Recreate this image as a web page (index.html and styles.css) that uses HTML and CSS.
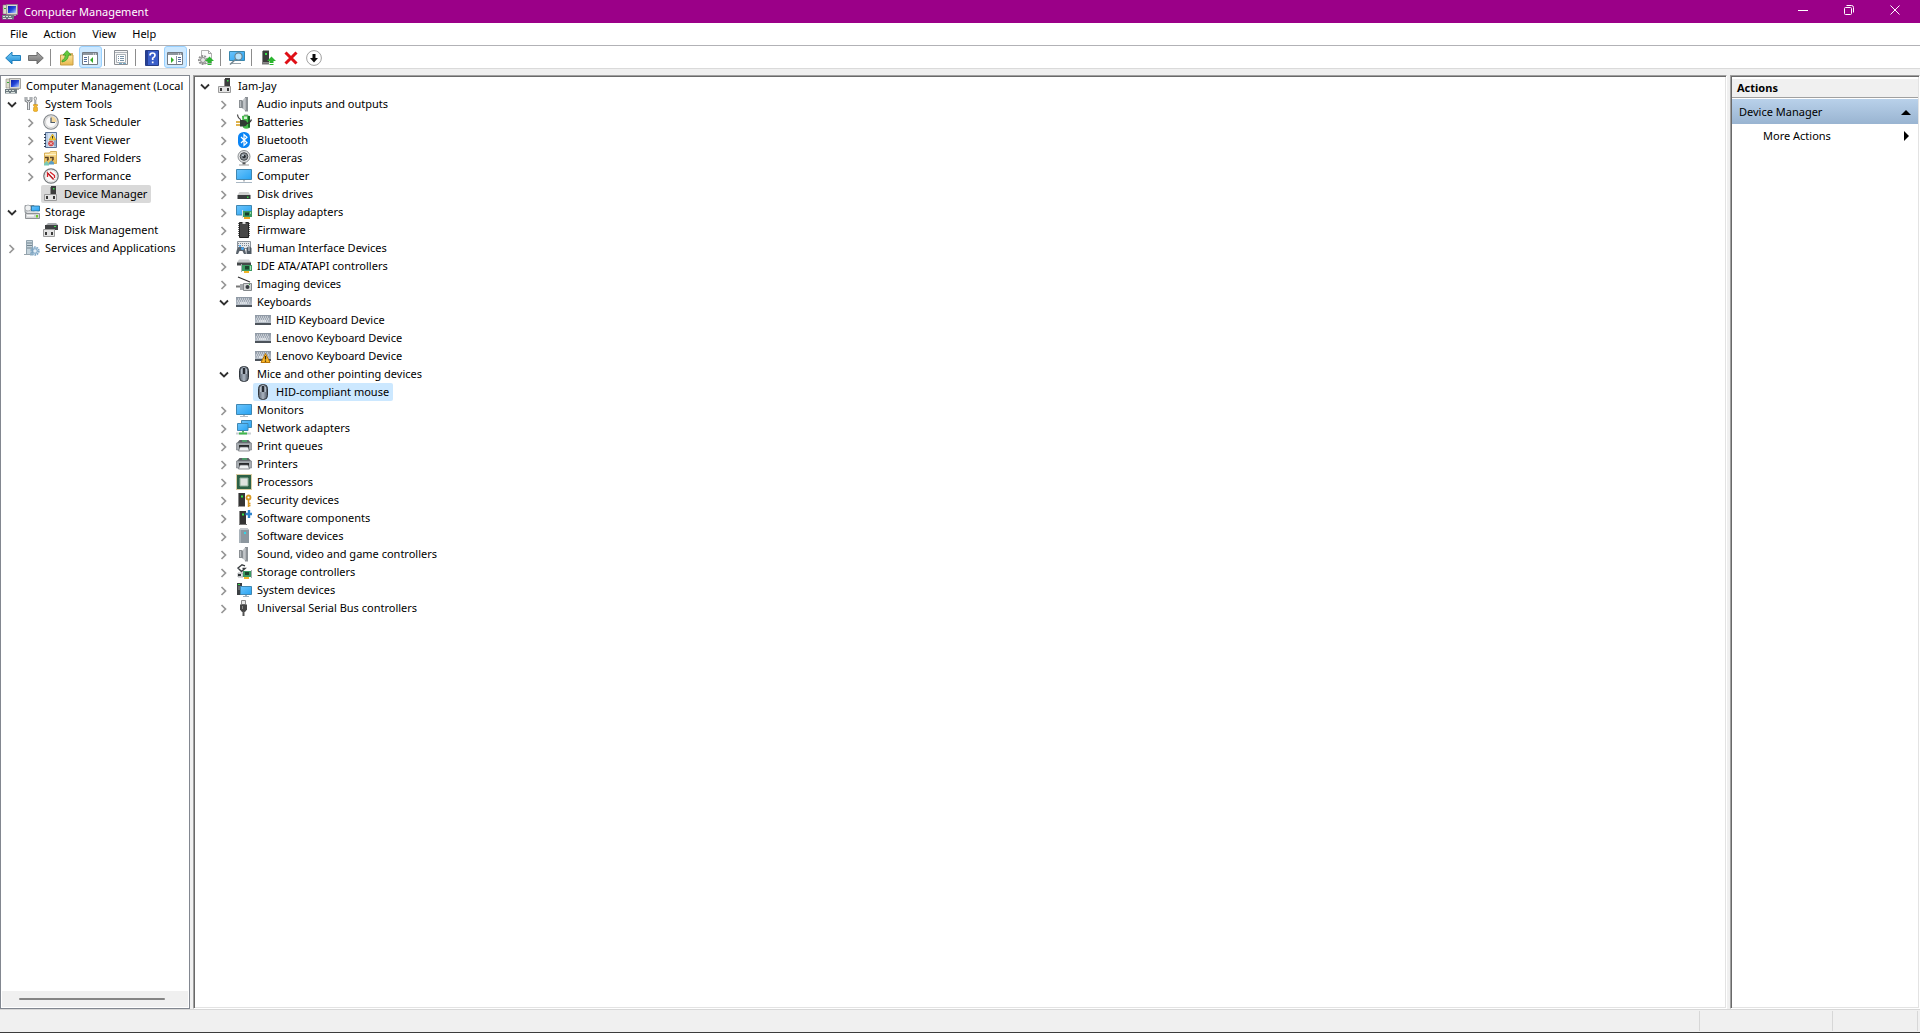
FILE: index.html
```html
<!DOCTYPE html>
<html lang="en">
<head>
<meta charset="utf-8">
<title>Computer Management</title>
<link rel="stylesheet" href="styles.css">
</head>
<body>
<svg class="sprite" aria-hidden="true">
  <defs>
    <linearGradient id="g-screen" x1="0" y1="0" x2="1" y2="1"><stop offset="0" stop-color="#6cc4fb"/><stop offset="1" stop-color="#27a3f3"/></linearGradient>
    <linearGradient id="g-navy" x1="0" y1="0" x2="1" y2="1"><stop offset="0" stop-color="#0a1fa8"/><stop offset=".5" stop-color="#2446d8"/><stop offset="1" stop-color="#b9d2ff"/></linearGradient>
    <linearGradient id="g-metal" x1="0" y1="0" x2="1" y2="0"><stop offset="0" stop-color="#6f7479"/><stop offset=".5" stop-color="#c9cdd1"/><stop offset="1" stop-color="#8b9095"/></linearGradient>
    <linearGradient id="g-mouse" x1="0" y1="0" x2="1" y2="0"><stop offset="0" stop-color="#5a6470"/><stop offset=".5" stop-color="#aab4c0"/><stop offset="1" stop-color="#4c5561"/></linearGradient>
    <linearGradient id="g-blue" x1="0" y1="0" x2="0" y2="1"><stop offset="0" stop-color="#7fd0f8"/><stop offset="1" stop-color="#1787d2"/></linearGradient>
    <linearGradient id="g-gray" x1="0" y1="0" x2="0" y2="1"><stop offset="0" stop-color="#b0b0b0"/><stop offset="1" stop-color="#707070"/></linearGradient>
    <linearGradient id="g-folder" x1="0" y1="0" x2="0" y2="1"><stop offset="0" stop-color="#fbe3a0"/><stop offset="1" stop-color="#e9b94e"/></linearGradient>
    <linearGradient id="g-key" x1="0" y1="0" x2="0" y2="1"><stop offset="0" stop-color="#8d97a3"/><stop offset="1" stop-color="#b6bec8"/></linearGradient>
  </defs>
  <symbol id="i-open" viewBox="0 0 16 16"><path d="M4 6.500 8 10.500l4-4" fill="none" stroke="#303030" stroke-width="1.800"/></symbol>
  <symbol id="i-closed" viewBox="0 0 16 16"><path d="M5.500 5 9.500 9 5.500 13" fill="none" stroke="#969696" stroke-width="1.700"/></symbol>
  <symbol id="i-mmc" viewBox="0 0 16 16"><path d="M1 1h4v9H1z" fill="#dcdccb" stroke="#8c8c80" stroke-width=".6"/><path d="M4.500.5h11v10h-11z" fill="#d8d8d2" stroke="#8a8a86" stroke-width=".7"/><path d="M6 2h8v7H6z" fill="url(#g-navy)"/><path d="M9 10.500h5V12H9z" fill="#a6a69e"/><path d="M0 11h12v4.500H0z" fill="#6e7a80"/><path d="M1 12h2v1H1zm3 0h2v1H4zm3 0h2v1H7zM1 14h3v1H1zm5 0h4v1H6z" fill="#d7e0dc"/><path d="M2 4h2v1H2z" fill="#38a938"/></symbol>
  <symbol id="i-tools" viewBox="0 0 16 16"><path d="M2 1v3.500L4.500 6 7 4.500V1M4.500 6v8" fill="none" stroke="#7b7f83" stroke-width="2.800"/><path d="M2 1v3.500L4.500 6 7 4.500V1M4.500 6v7.500" fill="none" stroke="#e3e6e8" stroke-width="1"/><path d="M10.500 1h1.500l.5 2-.7 1v5h-1V4l-.8-1z" fill="#fff" stroke="#7c8084" stroke-width=".8"/><path d="M9.500 8.500h4v1.500h-1v1.500h1V15q-2 1.500-4 0v-3.500h1V10h-1z" fill="#f5b82a" stroke="#c98a12" stroke-width=".5"/></symbol>
  <symbol id="i-clock" viewBox="0 0 16 16"><circle cx="8" cy="8" r="7.300" fill="#e8e8e8" stroke="#84888c" stroke-width="1.100"/><circle cx="8" cy="8" r="5.500" fill="#fafafa" stroke="#c0c0c0" stroke-width=".6"/><path d="M8 8V2.500A5.500 5.500 0 0 1 13.500 8z" fill="#f3d79b"/><path d="M8 3.500V8.500h4" fill="none" stroke="#4d5a68" stroke-width="1.200"/></symbol>
  <symbol id="i-event" viewBox="0 0 16 16"><path d="M2.500.5h11v15h-11z" fill="#b7cbe4" stroke="#5a7398"/><path d="M5 1h8v14H5z" fill="#d3e0f0"/><path d="M1 2h2v1H1zm0 3h2v1H1zm0 3h2v1H1zm0 3h2v1H1zm0 3h2v1H1z" fill="#2d3c52"/><path d="m9.500 2 3.500 6H6z" fill="#f7cf3a" stroke="#c39410" stroke-width=".6"/><path d="M9.500 4v2.500" stroke="#333"/><circle cx="8" cy="11.500" r="2.800" fill="#cf4444"/><path d="m6.800 10.300 2.400 2.400m0-2.400-2.400 2.400" stroke="#fff" stroke-width=".8"/><path d="M12 8.500v6" stroke="#4d74a8"/></symbol>
  <symbol id="i-shared" viewBox="0 0 16 16"><path d="M1.500 3h5l1-1.500h6v12h-12z" fill="url(#g-folder)" stroke="#cda03f" stroke-width=".8"/><path d="M2 4.500h11" stroke="#fff2c9"/><path d="M2 7.500h3v2l-1 1M7 7.500h3v2l-1 1" fill="none" stroke="#5a4026" stroke-width="1.500"/><path d="M1 15.500v-2L3.500 11 6 13.500v2z" fill="#79c9b5"/><path d="M6 14.500v-2L8.500 10.500 11 12.500v2z" fill="#5b9cc4"/></symbol>
  <symbol id="i-perf" viewBox="0 0 16 16"><circle cx="8" cy="8" r="7.200" fill="#fff" stroke="#74787b" stroke-width="1.300"/><circle cx="8" cy="8" r="5.800" fill="#fafafa" stroke="#d0d0d0" stroke-width=".6"/><path d="M4.500 9V5L10.500 11.500M7 4l4.500 3.500V10" fill="none" stroke="#d8232a" stroke-width="1.300"/><path d="m5 5 6 6.500" stroke="#7e1b1f" stroke-width=".7"/></symbol>
  <symbol id="i-dev" viewBox="0 0 16 16"><path d="M8 0h5v9H8z" fill="#3d3d3d"/><path d="M7 1h1v8H7z" fill="#8d8d8d"/><path d="M10 2h1.500v1.500H10z" fill="#3be04a"/><path d="M1.500 8.500h12v6h-12z" fill="#e4e4e4" stroke="#9b9b9b"/><path d="M3 10h2v3H3zm7 0h2v3h-2z" fill="#3a3a3a"/></symbol>
  <symbol id="i-storage" viewBox="0 0 16 16"><path d="M1 1.500h9v7H1z" fill="#c6cbce" stroke="#84898d" stroke-width=".8"/><circle cx="4" cy="4" r="3" fill="#eef0f1" stroke="#9ca1a5" stroke-width=".7"/><path d="M7.500 2h8v5h-8z" fill="url(#g-screen)" stroke="#1b6b9b" stroke-width=".8"/><path d="m2 9 2-1.500h9L15 9z" fill="#dfe1e3"/><path d="M1.500 9.500h14v5h-14z" fill="#d2d4d6" stroke="#777b80" stroke-width=".8"/><path d="M3 11h7v1.500H3z" fill="#f8f8f8"/><path d="M12 11h2v2.500h-2z" fill="#6fca2c"/></symbol>
  <symbol id="i-diskm" viewBox="0 0 16 16"><path d="m3 3 2-2h8l2 2z" fill="#a7aaad"/><path d="M2 3h13v5H2z" fill="#404244"/><path d="M11 4h2v1h-2z" fill="#3be04a"/><path d="M.5 7.500h11v7H.5z" fill="#e4e4e4" stroke="#9b9b9b"/><path d="M2 10h2v3H2zm6 0h2v3H8z" fill="#3a3a3a"/></symbol>
  <symbol id="i-services" viewBox="0 0 16 16"><path d="M2.500.5h6v14h-6z" fill="#c6d4dc" stroke="#7e929e" stroke-width=".8"/><path d="M3 3h5M3 5.500h5M3 8h5" stroke="#73848f"/><path d="M0 14.500h9" stroke="#97a4ac"/><circle cx="11" cy="11" r="3.700" fill="none" stroke="#7ea7c6" stroke-width="2" stroke-dasharray="1.600 .7"/><circle cx="11" cy="11" r="2.300" fill="#e5eff6" stroke="#6e9cc0"/><path d="M6 13.500h3M6 15h3" stroke="#8fb2cb"/></symbol>
  <symbol id="i-speaker" viewBox="0 0 16 16"><path d="M3 4h3v8H3z" fill="#8a8f93"/><path d="M4 5h1v6H4z" fill="#b9bdc1"/><path d="m6 5 3.500-4v14L6 12z" fill="url(#g-metal)"/><path d="M9 1h3v14.500H9z" fill="#8c9196"/><path d="M8.500 2h1v12h-1z" fill="#d7dadc"/></symbol>
  <symbol id="i-battery" viewBox="0 0 16 16"><path d="M8 .5h4V2H8z" fill="#9a9a9a"/><path d="M6 2q4-1.500 8 0v11.500q-4 2.500-7 0z" fill="#43b94a"/><path d="M12 2h2v11.500h-2z" fill="#1d6b25"/><path d="M8 2.500h3V5H8z" fill="#d3f3d0"/><path d="M1.500.500q.5 4 3.500 5" fill="none" stroke="#454545" stroke-width="1.200"/><path d="M0 8h5M0 11h5" stroke="#d39a14" stroke-width="1.400"/><path d="M4 6h3q4 0 4 3.200T7 12.500H4z" fill="#303a33"/><path d="M10 9.500q4 0 5.500-4" fill="none" stroke="#333" stroke-width="1.300"/></symbol>
  <symbol id="i-bt" viewBox="0 0 16 16"><rect x="2" y="0" width="12" height="16" rx="5.500" fill="#0a84f5"/><path d="m5 5 6 5.800-3 2.700v-11l3 2.700L5 11" fill="none" stroke="#fff" stroke-width="1.200"/></symbol>
  <symbol id="i-camera" viewBox="0 0 16 16"><circle cx="8" cy="6.500" r="6" fill="#e2e3e4" stroke="#8b8f92"/><circle cx="8" cy="6.500" r="3.800" fill="#8a9095" stroke="#43484c"/><circle cx="8" cy="6.500" r="1.800" fill="#252a2e"/><circle cx="7" cy="5.500" r=".9" fill="#d5e2ec"/><path d="M6.500 12.500h3v2h-3z" fill="#555"/><path d="M3 15h10" stroke="#999" stroke-width="1"/></symbol>
  <symbol id="i-computer" viewBox="0 0 16 16"><path d="M.5 1.500h15v10H.5z" fill="url(#g-screen)" stroke="#3f87b2"/><path d="M7 12h2v1.500H7z" fill="#b8bcc0"/><path d="M0 14.500h16" stroke="#a9b7c3"/></symbol>
  <symbol id="i-disk" viewBox="0 0 16 16"><path d="m1.500 9 2-3h9l2 3z" fill="#cfcfcf"/><path d="M1.500 9h13v4h-13z" fill="#393b3d"/><path d="M11 10.500h1.500V12H11z" fill="#35d845"/></symbol>
  <symbol id="i-display" viewBox="0 0 16 16"><path d="M.5 1.500h15v9.500H.5z" fill="url(#g-screen)" stroke="#3f87b2"/><path d="M7 7h9v6H7z" fill="#3b9a62"/><path d="M9 8.500h4v3H9z" fill="#173e2a"/><path d="M14 8h1v2h-1z" fill="#9adab0"/><path d="M8 13h6v2H8z" fill="#e8a520"/><path d="M6.500 6v8" stroke="#dbe1e4"/></symbol>
  <symbol id="i-firmware" viewBox="0 0 16 16"><path d="M2 1.500h12M2 3.500h12M2 5.500h12M2 7.500h12M2 9.500h12M2 11.500h12M2 13.500h12" stroke="#6b6b6b"/><path d="M3.500.5h9v15h-9z" fill="#484848" stroke="#222"/><path d="M6.500 0h3v2h-3z" fill="#ddd"/></symbol>
  <symbol id="i-hid" viewBox="0 0 16 16"><path d="M1.500 1.500h13v7h-13z" fill="#e5e8eb" stroke="#8d959d"/><path d="M2 3.500h12M2 5.500h12" stroke="#7d8791" stroke-dasharray="1 1"/><path d="M0 14q.5-5 2.500-7h5q2 2 2.500 7H8l-1.500-3h-3L2 14z" fill="#59626b"/><circle cx="6.500" cy="8.500" r="1.500" fill="#4aa5ec"/><circle cx="4" cy="6" r="1" fill="#4aa5ec"/><path d="M10.500 8q2.500-3 5 0v6h-5z" fill="#4e5862"/><path d="M13 7v4" stroke="#d3dbe3"/></symbol>
  <symbol id="i-ide" viewBox="0 0 16 16"><path d="m1 4.500 2-3h10l2 3z" fill="#c9cbcd"/><path d="M1 4.500h14v3H1z" fill="#44484a"/><path d="M6 7h10v6H6z" fill="#3b9a62"/><path d="M9 8h4v3.500H9z" fill="#1b452e"/><path d="M14 8h1v4h-1z" fill="#a5e0b5"/><path d="M8 13h5v2H8z" fill="#f0b429"/><path d="M5.500 6v8" stroke="#a7adb1"/></symbol>
  <symbol id="i-imaging" viewBox="0 0 16 16"><path d="m2 1 12 5" stroke="#303030" stroke-width="1.200"/><path d="M0 9.500h5v2H0z" fill="#777"/><path d="M4 8h4v6H4z" fill="#a3a7aa"/><path d="M7.500 7.500h8v7h-8z" fill="#d3d5d6" stroke="#85898c"/><circle cx="11.500" cy="11" r="2" fill="#353b3f"/><path d="M13 8.500h1" stroke="#37bb45"/></symbol>
  <symbol id="i-keyboard" viewBox="0 0 16 16"><path d="M0 3h16v8H0z" fill="url(#g-key)"/><path d="M2 5h12M2 9h12" stroke="#f0f3f6" stroke-dasharray="1 1"/><path d="M1 7h13" stroke="#f0f3f6" stroke-dasharray="1 1"/><path d="M4 9h7" stroke="#f0f3f6"/><path d="M0 11h16v2H0z" fill="#4c535b"/></symbol>
  <symbol id="i-kbwarn" viewBox="0 0 16 16"><use href="#i-keyboard" width="16" height="16"/><path d="m10.500 5.500 4.500 9h-9z" fill="#fbb829" stroke="#b9760a" stroke-linejoin="round"/><path d="M10.500 8v3.500M10.500 12.500v1.300" stroke="#3c2a05" stroke-width="1.300"/></symbol>
  <symbol id="i-mouse" viewBox="0 0 16 16"><rect x="3.500" y=".5" width="9" height="15" rx="4" fill="url(#g-mouse)" stroke="#30363d"/><path d="M8 2v6" stroke="#1b1f24" stroke-width="1.800"/><path d="M5.500 3v5M10.500 3v5" stroke="#ccd4dd" stroke-width=".7"/></symbol>
  <symbol id="i-monitor" viewBox="0 0 16 16"><path d="M.5 2.500h15v10H.5z" fill="url(#g-screen)" stroke="#3f87b2"/><path d="M7 13h2v1H7zM4 14h8v1H4z" fill="#b4bec6"/></symbol>
  <symbol id="i-network" viewBox="0 0 16 16"><path d="M5.500.5h10v7h-10z" fill="url(#g-screen)" stroke="#3f87b2"/><path d="M1.500 3.500h10.500v7H1.500z" fill="url(#g-screen)" stroke="#3f87b2"/><path d="M6 11h2v2H6z" fill="#54b85d"/><path d="M0 13.500h15" stroke="#cbd0d4" stroke-width="2"/><path d="M3 13.500h8" stroke="#3fb74c" stroke-width="2"/></symbol>
  <symbol id="i-printer" viewBox="0 0 16 16"><path d="m1 5 2.500-3h9L15 5z" fill="#5c6166"/><path d="M6 3h5" stroke="#40d26c"/><path d="M.5 5h15v7H.5z" fill="#a6abb0" stroke="#7c8288" stroke-width=".7"/><path d="M3 7h10v3H3z" fill="#27292b"/><path d="M4 9h8l1.500 4h-11z" fill="#eef0f2" stroke="#5e6367" stroke-width=".7"/></symbol>
  <symbol id="i-cpu" viewBox="0 0 16 16"><path d="M.5.5h15v15H.5z" fill="none" stroke="#b29b48" stroke-dasharray="1 1"/><path d="M1 1h14v14H1z" fill="#2c6146"/><path d="M4 4h8v8H4z" fill="#dfe3e0" stroke="#8fb09c"/></symbol>
  <symbol id="i-security" viewBox="0 0 16 16"><path d="M3 1h6v13H3z" fill="#343434"/><path d="M2.500 1v13" stroke="#8a8a8a"/><path d="M5 3.500h2v2H5z" fill="#35e348"/><path d="M2 14h7v1H2z" fill="#999"/><circle cx="12.500" cy="5.500" r="2" fill="#fff" stroke="#d99a24" stroke-width="1.800"/><path d="M12.500 8v7M12.500 11.500h2M12.500 13.500h2" stroke="#d99a24" stroke-width="1.500" fill="none"/></symbol>
  <symbol id="i-component" viewBox="0 0 16 16"><path d="M4 1h6v13H4z" fill="#343434"/><path d="M3.500 1v13" stroke="#8a8a8a"/><path d="M6 3.500h2v2H6z" fill="#35e348"/><path d="M3 14h8v1H3z" fill="#777"/><path d="M13 0v8M9.500 4H16" stroke="#2f84cc" stroke-width="2.400"/></symbol>
  <symbol id="i-softdev" viewBox="0 0 16 16"><path d="m3 2 2-2h6l2 2v13H3z" fill="#8d979f"/><path d="m3 2 2-2h6l2 2z" fill="#c3c9ce"/><path d="M3 2h2v13H3z" fill="#a8b1b8"/><path d="M8 4h2v2H8z" fill="#33d6e8"/></symbol>
  <symbol id="i-storctl" viewBox="0 0 16 16"><path d="M9 1.800 6 .8 2 4l3.500 3.500L9 4.500H6.500" fill="none" stroke="#3b3f42" stroke-width="1.400"/><path d="M2 9h5v4H2z" fill="#e3e6e8" stroke="#83888b" stroke-width=".6"/><path d="M2 11h3" stroke="#2f3437" stroke-width="2"/><path d="M7 7h8v6H7z" fill="#3b9a62"/><path d="M9 8h4v3H9z" fill="#1b452e"/><path d="M8 13h5v2H8z" fill="#f0b429"/><path d="M15.500 6v8" stroke="#a7adb1"/></symbol>
  <symbol id="i-system" viewBox="0 0 16 16"><path d="M1 1h5v12H1z" fill="#3c4043"/><path d="M2 2.500h2" stroke="#37dd4a"/><path d="M2 5h3M2 7h3" stroke="#8e9499"/><path d="M4.500 4.500h11v8h-11z" fill="url(#g-screen)" stroke="#3f87b2"/><path d="M9 13h2v1H9zM7 14h6v1H7z" fill="#9fb0bd"/></symbol>
  <symbol id="i-usb" viewBox="0 0 16 16"><path d="M5.500.5h4v4h-4z" fill="#e8e8e8" stroke="#888"/><path d="M4 4.500h7v5L9 12H6L4 9.500z" fill="#454545"/><path d="M7.500 11v5" stroke="#555" stroke-width="2"/><path d="M6.500 6v3" stroke="#8a8a8a"/></symbol>
  <symbol id="t-back" viewBox="0 0 16 16"><path d="M.7 8 7 2v3.500h8.500v5H7V14z" fill="url(#g-blue)" stroke="#1f7fbd"/></symbol>
  <symbol id="t-fwd" viewBox="0 0 16 16"><path d="M15.300 8 9 2v3.500H.5v5H9V14z" fill="url(#g-gray)" stroke="#6e6e6e"/></symbol>
  <symbol id="t-up" viewBox="0 0 16 16"><path d="M1.500 5h12.500v10H1.500z" fill="url(#g-folder)" stroke="#c79d45"/><path d="M9 4h5" stroke="#c79d45" stroke-width="1.500"/><path d="M3 10.500q3-1 3.500-5.500H4L8 .5 12 5H9.500q-.5 6-6.500 7z" fill="#62c93c" stroke="#369421" stroke-width=".7"/></symbol>
  <symbol id="t-pane" viewBox="0 0 16 16"><path d="M.5 2.500h15v12H.5z" fill="#fff" stroke="#727a83"/><path d="M1 3h14v2H1z" fill="#8e969f"/><path d="M11 4h1m1 0h1" stroke="#fff"/><path d="M6.500 6v8" stroke="#8e969f"/><path d="M2 7.500h3M2 9.500h3M2 11.500h3" stroke="#536b9d"/><path d="M11 7v6l-3-3z" fill="#33a928"/></symbol>
  <symbol id="t-pane2" viewBox="0 0 16 16"><path d="M.5 2.500h15v12H.5z" fill="#fff" stroke="#727a83"/><path d="M1 3h14v2H1z" fill="#8e969f"/><path d="M11 4h1m1 0h1" stroke="#fff"/><path d="M9.500 6v8" stroke="#8e969f"/><path d="M11 7.500h3M11 9.500h3M11 11.500h3" stroke="#536b9d"/><path d="M4 7v6l3-3z" fill="#33a928"/></symbol>
  <symbol id="t-props" viewBox="0 0 16 16"><path d="M1.500.5h13v14h-13z" fill="#f6f6f6" stroke="#8b8f94"/><path d="M2 2.500h12" stroke="#aeb3b9"/><path d="M3.500 4.500h9v8h-9z" fill="#fff" stroke="#adb3b8"/><path d="M5 6.500h1m1 0h4M5 8.500h1m1 0h4M5 10.500h1m1 0h4" stroke="#7893a8"/><path d="M6 13.500h3m1 0h3" stroke="#77abc8"/></symbol>
  <symbol id="t-help" viewBox="0 0 16 16"><path d="M1.500.5h13v15h-13z" fill="#3a5ec9" stroke="#263d87"/><path d="M2 1h2v14H2z" fill="#253f96"/><path d="M6 5.500q0-2.500 2.500-2.500T11 5.300Q11 7 8.700 8.200V10M8.700 11.500v1.800" fill="none" stroke="#fff" stroke-width="1.700"/></symbol>
  <symbol id="t-scan" viewBox="0 0 16 16"><path d="M3.500.5h7l3 3v10h-10z" fill="#fafafa" stroke="#b1b1b1"/><path d="M10.500.5v3h3" fill="none" stroke="#a5a5a5"/><circle cx="5" cy="10" r="4" fill="none" stroke="#909090" stroke-width="2" stroke-dasharray="1.800 1"/><circle cx="5" cy="10" r="2.500" fill="#e5e5e5" stroke="#8b8b8b"/><path d="m11.500 6.500 4.500 4.500h-2.500v2h-4v-2H7z" fill="#2bb52f"/><path d="M9.500 14.500h4" stroke="#2bb52f"/></symbol>
  <symbol id="t-find" viewBox="0 0 16 16"><path d="M.5 1.500h15v9H.5z" fill="url(#g-screen)" stroke="#3a86ac"/><path d="M3 13.500h9" stroke="#9aa5ad"/><path d="m7 9-6 5.500" stroke="#728690" stroke-width="1.600"/><circle cx="9.500" cy="6.500" r="3.600" fill="#b7e3fb" stroke="#688391" stroke-width="1.100"/></symbol>
  <symbol id="t-update" viewBox="0 0 16 16"><path d="M3 .5h6v12H3z" fill="#3b3b3b"/><path d="M2.500 1v12" stroke="#888"/><path d="M5 3h2v2H5z" fill="#36df48"/><path d="M2 12.500h7v2H2z" fill="#777"/><path d="m11.500 6.500 4.500 4.500h-2.500v2h-4v-2H7z" fill="#2bb52f"/><path d="M9.500 14.500h4" stroke="#2bb52f"/></symbol>
  <symbol id="t-x" viewBox="0 0 16 16"><path d="m2.500 2.500 11 11m0-11-11 11" stroke="#df0f16" stroke-width="3"/></symbol>
  <symbol id="t-down" viewBox="0 0 16 16"><circle cx="8" cy="8" r="7.400" fill="#fff" stroke="#898989" stroke-width=".8"/><path d="M6.500 4h3v4H12l-4 4.500L4 8h2.500z" fill="#0b0b0b"/></symbol>
</svg>

<header class="titlebar">
  <svg class="icon"><use href="#i-mmc"/></svg>
  <h1 class="title">Computer Management</h1>
  <div class="window-buttons">
    <button type="button" aria-label="Minimize"><svg viewBox="0 0 10 10"><path d="M0 5.500h10"/></svg></button>
    <button type="button" aria-label="Restore"><svg viewBox="0 0 10 10"><rect x=".5" y="2.500" width="7" height="7" rx="1"/><path d="M2.500.5h5q2 0 2 2v5"/></svg></button>
    <button type="button" aria-label="Close"><svg viewBox="0 0 10 10"><path d="m.5.500 9 9m0-9-9 9"/></svg></button>
  </div>
</header>

<nav class="menubar">
  <button type="button">File</button>
  <button type="button">Action</button>
  <button type="button">View</button>
  <button type="button">Help</button>
</nav>

<div class="toolbar" role="toolbar" aria-label="Tools">
  <button type="button" aria-label="Back"><svg class="icon"><use href="#t-back"/></svg></button>
  <button type="button" aria-label="Forward"><svg class="icon"><use href="#t-fwd"/></svg></button>
  <span class="separator"></span>
  <button type="button" aria-label="Up one level"><svg class="icon"><use href="#t-up"/></svg></button>
  <button type="button" class="pressed" aria-pressed="true" aria-label="Console tree"><svg class="icon"><use href="#t-pane"/></svg></button>
  <span class="separator"></span>
  <button type="button" aria-label="Properties"><svg class="icon"><use href="#t-props"/></svg></button>
  <span class="separator"></span>
  <button type="button" aria-label="Help"><svg class="icon"><use href="#t-help"/></svg></button>
  <button type="button" class="pressed" aria-pressed="true" aria-label="Action pane"><svg class="icon"><use href="#t-pane2"/></svg></button>
  <span class="separator"></span>
  <button type="button" aria-label="Update driver"><svg class="icon"><use href="#t-scan"/></svg></button>
  <span class="separator"></span>
  <button type="button" aria-label="Scan for hardware changes"><svg class="icon"><use href="#t-find"/></svg></button>
  <span class="separator"></span>
  <button type="button" aria-label="Update device"><svg class="icon"><use href="#t-update"/></svg></button>
  <button type="button" aria-label="Uninstall device"><svg class="icon"><use href="#t-x"/></svg></button>
  <button type="button" aria-label="Disable device"><svg class="icon"><use href="#t-down"/></svg></button>
</div>

<main class="panes">
  <nav class="console" aria-label="Console tree">
    <ul class="tree">
      <li><div class="row"><span class="item"><svg class="icon"><use href="#i-mmc"/></svg>Computer Management (Local</span></div></li>
      <li><div class="row"><button type="button" class="twisty" aria-label="Collapse"><svg class="icon"><use href="#i-open"/></svg></button><span class="item"><svg class="icon"><use href="#i-tools"/></svg>System Tools</span></div>
        <ul>
          <li><div class="row"><button type="button" class="twisty" aria-label="Expand"><svg class="icon"><use href="#i-closed"/></svg></button><span class="item"><svg class="icon"><use href="#i-clock"/></svg>Task Scheduler</span></div></li>
          <li><div class="row"><button type="button" class="twisty" aria-label="Expand"><svg class="icon"><use href="#i-closed"/></svg></button><span class="item"><svg class="icon"><use href="#i-event"/></svg>Event Viewer</span></div></li>
          <li><div class="row"><button type="button" class="twisty" aria-label="Expand"><svg class="icon"><use href="#i-closed"/></svg></button><span class="item"><svg class="icon"><use href="#i-shared"/></svg>Shared Folders</span></div></li>
          <li><div class="row"><button type="button" class="twisty" aria-label="Expand"><svg class="icon"><use href="#i-closed"/></svg></button><span class="item"><svg class="icon"><use href="#i-perf"/></svg>Performance</span></div></li>
          <li><div class="row leaf"><span class="item current"><svg class="icon"><use href="#i-dev"/></svg>Device Manager</span></div></li>
        </ul>
      </li>
      <li><div class="row"><button type="button" class="twisty" aria-label="Collapse"><svg class="icon"><use href="#i-open"/></svg></button><span class="item"><svg class="icon"><use href="#i-storage"/></svg>Storage</span></div>
        <ul>
          <li><div class="row leaf"><span class="item"><svg class="icon"><use href="#i-diskm"/></svg>Disk Management</span></div></li>
        </ul>
      </li>
      <li><div class="row"><button type="button" class="twisty" aria-label="Expand"><svg class="icon"><use href="#i-closed"/></svg></button><span class="item"><svg class="icon"><use href="#i-services"/></svg>Services and Applications</span></div></li>
    </ul>
    <div class="scrollbar"><div class="thumb"></div></div>
  </nav>

  <section class="devices sunken" aria-label="Devices">
    <ul class="tree">
      <li><div class="row"><button type="button" class="twisty" aria-label="Collapse"><svg class="icon"><use href="#i-open"/></svg></button><span class="item"><svg class="icon"><use href="#i-dev"/></svg>Iam-Jay</span></div>
        <ul>
          <li><div class="row"><button type="button" class="twisty" aria-label="Expand"><svg class="icon"><use href="#i-closed"/></svg></button><span class="item"><svg class="icon"><use href="#i-speaker"/></svg>Audio inputs and outputs</span></div></li>
          <li><div class="row"><button type="button" class="twisty" aria-label="Expand"><svg class="icon"><use href="#i-closed"/></svg></button><span class="item"><svg class="icon"><use href="#i-battery"/></svg>Batteries</span></div></li>
          <li><div class="row"><button type="button" class="twisty" aria-label="Expand"><svg class="icon"><use href="#i-closed"/></svg></button><span class="item"><svg class="icon"><use href="#i-bt"/></svg>Bluetooth</span></div></li>
          <li><div class="row"><button type="button" class="twisty" aria-label="Expand"><svg class="icon"><use href="#i-closed"/></svg></button><span class="item"><svg class="icon"><use href="#i-camera"/></svg>Cameras</span></div></li>
          <li><div class="row"><button type="button" class="twisty" aria-label="Expand"><svg class="icon"><use href="#i-closed"/></svg></button><span class="item"><svg class="icon"><use href="#i-computer"/></svg>Computer</span></div></li>
          <li><div class="row"><button type="button" class="twisty" aria-label="Expand"><svg class="icon"><use href="#i-closed"/></svg></button><span class="item"><svg class="icon"><use href="#i-disk"/></svg>Disk drives</span></div></li>
          <li><div class="row"><button type="button" class="twisty" aria-label="Expand"><svg class="icon"><use href="#i-closed"/></svg></button><span class="item"><svg class="icon"><use href="#i-display"/></svg>Display adapters</span></div></li>
          <li><div class="row"><button type="button" class="twisty" aria-label="Expand"><svg class="icon"><use href="#i-closed"/></svg></button><span class="item"><svg class="icon"><use href="#i-firmware"/></svg>Firmware</span></div></li>
          <li><div class="row"><button type="button" class="twisty" aria-label="Expand"><svg class="icon"><use href="#i-closed"/></svg></button><span class="item"><svg class="icon"><use href="#i-hid"/></svg>Human Interface Devices</span></div></li>
          <li><div class="row"><button type="button" class="twisty" aria-label="Expand"><svg class="icon"><use href="#i-closed"/></svg></button><span class="item"><svg class="icon"><use href="#i-ide"/></svg>IDE ATA/ATAPI controllers</span></div></li>
          <li><div class="row"><button type="button" class="twisty" aria-label="Expand"><svg class="icon"><use href="#i-closed"/></svg></button><span class="item"><svg class="icon"><use href="#i-imaging"/></svg>Imaging devices</span></div></li>
          <li><div class="row"><button type="button" class="twisty" aria-label="Collapse"><svg class="icon"><use href="#i-open"/></svg></button><span class="item"><svg class="icon"><use href="#i-keyboard"/></svg>Keyboards</span></div>
            <ul>
              <li><div class="row leaf"><span class="item"><svg class="icon"><use href="#i-keyboard"/></svg>HID Keyboard Device</span></div></li>
              <li><div class="row leaf"><span class="item"><svg class="icon"><use href="#i-keyboard"/></svg>Lenovo Keyboard Device</span></div></li>
              <li><div class="row leaf"><span class="item"><svg class="icon"><use href="#i-kbwarn"/></svg>Lenovo Keyboard Device</span></div></li>
            </ul>
          </li>
          <li><div class="row"><button type="button" class="twisty" aria-label="Collapse"><svg class="icon"><use href="#i-open"/></svg></button><span class="item"><svg class="icon"><use href="#i-mouse"/></svg>Mice and other pointing devices</span></div>
            <ul>
              <li><div class="row leaf"><span class="item selected"><svg class="icon"><use href="#i-mouse"/></svg>HID-compliant mouse</span></div></li>
            </ul>
          </li>
          <li><div class="row"><button type="button" class="twisty" aria-label="Expand"><svg class="icon"><use href="#i-closed"/></svg></button><span class="item"><svg class="icon"><use href="#i-monitor"/></svg>Monitors</span></div></li>
          <li><div class="row"><button type="button" class="twisty" aria-label="Expand"><svg class="icon"><use href="#i-closed"/></svg></button><span class="item"><svg class="icon"><use href="#i-network"/></svg>Network adapters</span></div></li>
          <li><div class="row"><button type="button" class="twisty" aria-label="Expand"><svg class="icon"><use href="#i-closed"/></svg></button><span class="item"><svg class="icon"><use href="#i-printer"/></svg>Print queues</span></div></li>
          <li><div class="row"><button type="button" class="twisty" aria-label="Expand"><svg class="icon"><use href="#i-closed"/></svg></button><span class="item"><svg class="icon"><use href="#i-printer"/></svg>Printers</span></div></li>
          <li><div class="row"><button type="button" class="twisty" aria-label="Expand"><svg class="icon"><use href="#i-closed"/></svg></button><span class="item"><svg class="icon"><use href="#i-cpu"/></svg>Processors</span></div></li>
          <li><div class="row"><button type="button" class="twisty" aria-label="Expand"><svg class="icon"><use href="#i-closed"/></svg></button><span class="item"><svg class="icon"><use href="#i-security"/></svg>Security devices</span></div></li>
          <li><div class="row"><button type="button" class="twisty" aria-label="Expand"><svg class="icon"><use href="#i-closed"/></svg></button><span class="item"><svg class="icon"><use href="#i-component"/></svg>Software components</span></div></li>
          <li><div class="row"><button type="button" class="twisty" aria-label="Expand"><svg class="icon"><use href="#i-closed"/></svg></button><span class="item"><svg class="icon"><use href="#i-softdev"/></svg>Software devices</span></div></li>
          <li><div class="row"><button type="button" class="twisty" aria-label="Expand"><svg class="icon"><use href="#i-closed"/></svg></button><span class="item"><svg class="icon"><use href="#i-speaker"/></svg>Sound, video and game controllers</span></div></li>
          <li><div class="row"><button type="button" class="twisty" aria-label="Expand"><svg class="icon"><use href="#i-closed"/></svg></button><span class="item"><svg class="icon"><use href="#i-storctl"/></svg>Storage controllers</span></div></li>
          <li><div class="row"><button type="button" class="twisty" aria-label="Expand"><svg class="icon"><use href="#i-closed"/></svg></button><span class="item"><svg class="icon"><use href="#i-system"/></svg>System devices</span></div></li>
          <li><div class="row"><button type="button" class="twisty" aria-label="Expand"><svg class="icon"><use href="#i-closed"/></svg></button><span class="item"><svg class="icon"><use href="#i-usb"/></svg>Universal Serial Bus controllers</span></div></li>
        </ul>
      </li>
    </ul>
  </section>

  <aside class="actions sunken">
    <h2 class="actions-title">Actions</h2>
    <button type="button" class="group">Device Manager<svg class="arrow" viewBox="0 0 10 10"><path d="M0 8h10L5 3z"/></svg></button>
    <button type="button" class="more">More Actions<svg class="arrow" viewBox="0 0 10 10"><path d="M3 0v10l5-5z"/></svg></button>
  </aside>
</main>

<footer class="status">
  <span class="cell wide"></span>
  <span class="cell medium"></span>
  <span class="cell small"></span>
</footer>
</body>
</html>
```
FILE: styles.css
```css
* {
  box-sizing: border-box;
}

body {
  display: flex;
  flex-direction: column;
  min-height: 100vh;
  margin: 0;
  background: #f0f0f0;
  color: #000;
  font: 11px/18px "Noto Sans", "Open Sans", sans-serif;
}

button {
  padding: 0;
  border: 0;
  background: none;
  color: inherit;
  font: inherit;
}

ul {
  margin: 0;
  padding: 0;
  list-style: none;
}

.sprite {
  position: absolute;
  width: 0;
  height: 0;
}

.icon {
  display: block;
  flex: none;
  width: 16px;
  height: 16px;
}

/* Title bar */
.titlebar {
  display: flex;
  align-items: center;
  gap: 6px;
  height: 23px;
  padding-left: 2px;
  background: #9b0088;
  color: #fff;
}

.title {
  flex: 1;
  margin: 0;
  font-size: 11px;
  font-weight: 400;
}

.window-buttons {
  display: flex;
  align-self: stretch;
  padding-right: 2px;
}

.window-buttons button {
  display: grid;
  place-items: center;
  width: 46px;
  padding-bottom: 3px;
}

.window-buttons svg {
  width: 10px;
  height: 10px;
  fill: none;
  stroke: #fff;
}

/* Menu and toolbar */
.menubar {
  display: flex;
  height: 23px;
  padding-left: 2px;
  border-bottom: 1px solid #b2b2b6;
  background: #fff;
}

.menubar button {
  padding: 0 8px;
}

.toolbar {
  display: flex;
  height: 23px;
  padding-left: 2px;
  border-bottom: 1px solid #dadada;
  background: #fff;
}

.toolbar button {
  width: 23px;
  padding: 3px 3px 1px 2px;
  border: 1px solid transparent;
  border-radius: 3px;
}

.toolbar .pressed {
  border-color: #99d1ff;
  background: #cce8ff;
}

.separator {
  width: 8px;
  padding: 3px 0 2px 2px;
}

.separator::before {
  display: block;
  width: 1px;
  height: 100%;
  background: #8c8c8c;
  content: "";
}

/* Panes */
.panes {
  display: grid;
  flex: 1;
  grid-template-columns: 190px minmax(0, 1fr) 190px;
  gap: 3px;
  margin-top: 6px;
}

.console {
  display: flex;
  flex-direction: column;
  overflow: hidden;
  padding: 1px;
  border: 1px solid #828790;
  background: #fff;
}

.console .tree {
  flex: 1;
  padding-left: 1px;
}

.sunken {
  padding: 1px;
  border: 1px solid;
  border-color: #a0a0a0 #fff #fff #a0a0a0;
  background: #fff;
  box-shadow: inset 1px 1px #696969, inset -1px -1px #e3e3e3;
}

.devices .tree {
  padding-left: 1px;
}

.tree ul {
  padding-left: 19px;
}

.row {
  display: flex;
  height: 18px;
  white-space: nowrap;
}

.leaf {
  padding-left: 19px;
}

.twisty {
  width: 19px;
  padding: 1px 2px 1px 1px;
}

.item {
  display: flex;
  align-items: center;
  gap: 5px;
  padding: 0 4px 0 2px;
  border-radius: 2px;
}

.current {
  background: #d9d9d9;
}

.selected {
  background: #cce8ff;
}

.scrollbar {
  display: flex;
  align-items: center;
  height: 16px;
  padding: 0 23px 0 17px;
  background: #f0f0f0;
}

.thumb {
  flex: 1;
  height: 2px;
  border-radius: 1px;
  background: #858585;
}

/* Actions pane */
.actions {
  display: flex;
  flex-direction: column;
}

.actions-title {
  height: 19px;
  margin: 2px 0 1px;
  padding-left: 5px;
  border-bottom: 1px solid #a0a0a0;
  background: #f0f0f0;
  font-size: 11px;
  font-weight: 700;
}

.group,
.more {
  display: flex;
  align-items: center;
  justify-content: space-between;
  height: 25px;
  padding: 0 7px;
  text-align: left;
}

.group {
  background: linear-gradient(#b9d1ea, #99b4d1);
}

.more {
  height: 23px;
  padding-left: 31px;
}

.arrow {
  width: 10px;
  height: 10px;
}

/* Status bar */
.status {
  display: flex;
  height: 24px;
  padding: 1px 2px 1px 0;
  border-top: 1px solid #d7d7d7;
  border-bottom: 1px solid #3c3c3c;
}

.cell {
  border-right: 1px solid #d7d7d7;
}

.wide {
  flex: 1;
}

.medium {
  width: 133px;
}

.small {
  width: 85px;
}
```
